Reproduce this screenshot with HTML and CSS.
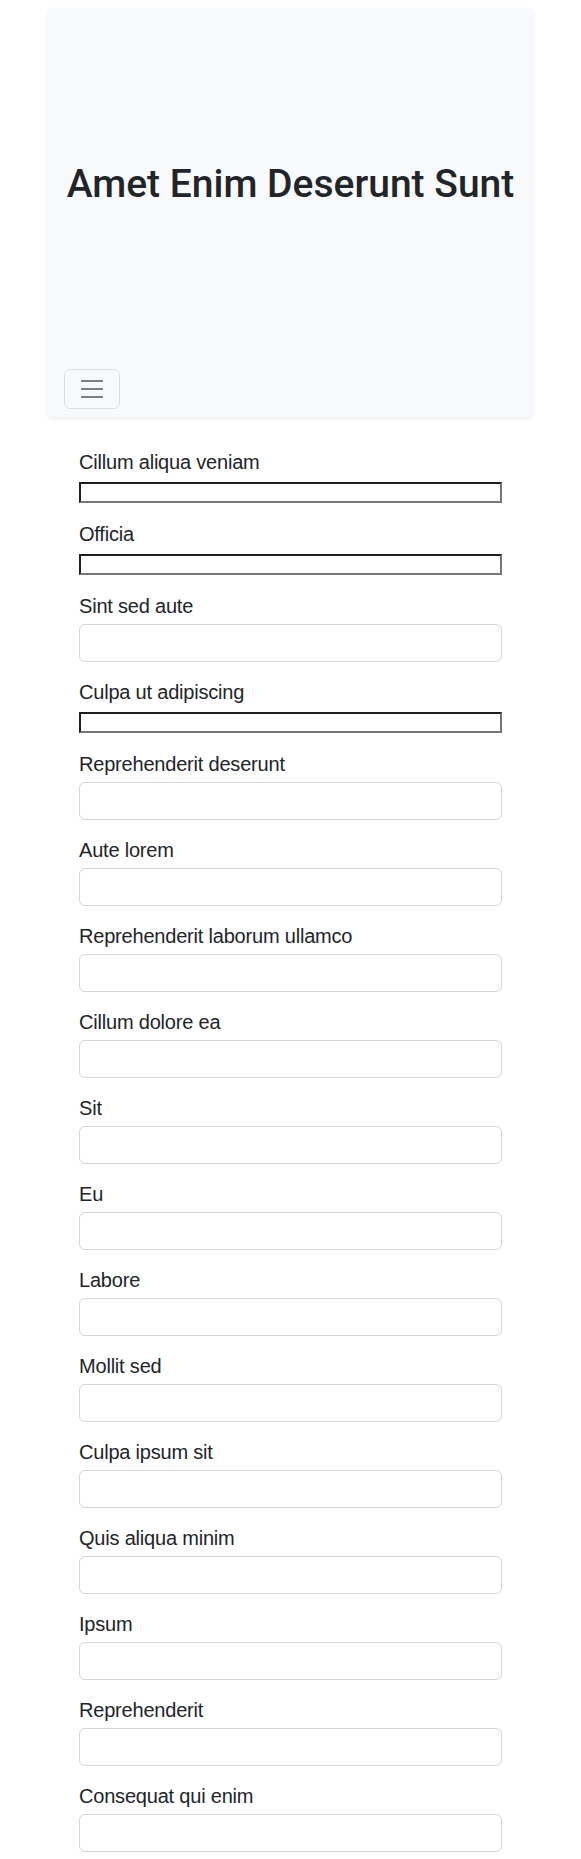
FILE: index.html
```html
<!DOCTYPE html>
<html lang="en">
<head>
<meta charset="utf-8">
<title>Form</title>
<link rel="stylesheet" href="styles.css">
</head>
<body>
<header class="hero">
  <div class="hero-title-wrap">
    <h1 class="hero-title">Amet Enim Deserunt Sunt</h1>
  </div>
  <nav class="hero-nav">
    <button class="toggler" type="button" aria-label="Toggle navigation">
      <svg class="toggler-icon" viewBox="0 0 30 30" width="30" height="30" aria-hidden="true">
        <path d="M4 7h22M4 15h22M4 23h22" stroke="#7d7f82" stroke-width="2" stroke-linecap="butt" fill="none"/>
      </svg>
    </button>
  </nav>
</header>

<form class="form">
  <div class="field"><label class="label">Cillum aliqua veniam</label><div class="plain-wrap"><input class="plain-input" type="text"></div></div>
  <div class="field"><label class="label">Officia</label><div class="plain-wrap"><input class="plain-input" type="text"></div></div>
  <div class="field"><label class="label">Sint sed aute</label><input class="control" type="text"></div>
  <div class="field"><label class="label">Culpa ut adipiscing</label><div class="plain-wrap"><input class="plain-input" type="text"></div></div>
  <div class="field"><label class="label">Reprehenderit deserunt</label><input class="control" type="text"></div>
  <div class="field"><label class="label">Aute lorem</label><input class="control" type="text"></div>
  <div class="field"><label class="label">Reprehenderit laborum ullamco</label><input class="control" type="text"></div>
  <div class="field"><label class="label">Cillum dolore ea</label><input class="control" type="text"></div>
  <div class="field"><label class="label">Sit</label><input class="control" type="text"></div>
  <div class="field"><label class="label">Eu</label><input class="control" type="text"></div>
  <div class="field"><label class="label">Labore</label><input class="control" type="text"></div>
  <div class="field"><label class="label">Mollit sed</label><input class="control" type="text"></div>
  <div class="field"><label class="label">Culpa ipsum sit</label><input class="control" type="text"></div>
  <div class="field"><label class="label">Quis aliqua minim</label><input class="control" type="text"></div>
  <div class="field"><label class="label">Ipsum</label><input class="control" type="text"></div>
  <div class="field"><label class="label">Reprehenderit</label><input class="control" type="text"></div>
  <div class="field"><label class="label">Consequat qui enim</label><input class="control" type="text"></div>
</form>
</body>
</html>
```

FILE: styles.css
```css
* { box-sizing: border-box; }

html, body {
  margin: 0;
  padding: 0;
  background: #ffffff;
}

body {
  font-family: "Liberation Sans", Arial, sans-serif;
  font-size: 16px;
  line-height: 1.5;
  color: #212529;
  padding-top: 8px;
}

.hero {
  width: 485px;
  margin: 0 auto;
  background: #f8f9fa;
  border-radius: 4px;
  box-shadow: 0 2px 4px rgba(0, 0, 0, 0.075);
  display: flex;
  flex-direction: column;
}

.hero-title-wrap {
  height: 353px;
  display: flex;
  align-items: center;
  justify-content: center;
}

.hero-title {
  margin: 0;
  font-family: Roboto, "Liberation Sans", sans-serif;
  font-size: 39px;
  font-weight: 500;
  line-height: 1.2;
  color: #212529;
  text-align: center;
}

.hero-nav {
  padding: 8px 16px;
  display: flex;
}

.toggler {
  width: 56px;
  height: 40px;
  padding: 4px 12px;
  background: transparent;
  border: 1px solid rgba(33, 37, 41, 0.12);
  border-radius: 6px;
  display: flex;
  align-items: center;
  justify-content: center;
}

.toggler-icon {
  display: block;
  width: 30px;
  height: 30px;
}

.form {
  width: 423px;
  margin: 33px auto 0;
}

.field {
  margin-bottom: 18px;
}

.label {
  display: inline-block;
  margin-bottom: 6px;
  font-size: 20px;
  line-height: 24px;
  letter-spacing: -0.2px;
}

.plain-input {
  width: 423px;
  height: 21px;
  margin: 0;
  padding: 1px 2px;
  font-size: 13px;
  background: #ffffff;
  border-width: 2px;
  border-style: solid;
  border-color: #1f1f1f #767676 #767676 #1f1f1f;
  border-radius: 0;
}

.control {
  display: block;
  width: 100%;
  height: 38px;
  padding: 6px 12px;
  font-family: inherit;
  font-size: 16px;
  line-height: 1.5;
  color: #212529;
  background: #ffffff;
  border: 1px solid #d3d6da;
  border-radius: 6px;
}
```
